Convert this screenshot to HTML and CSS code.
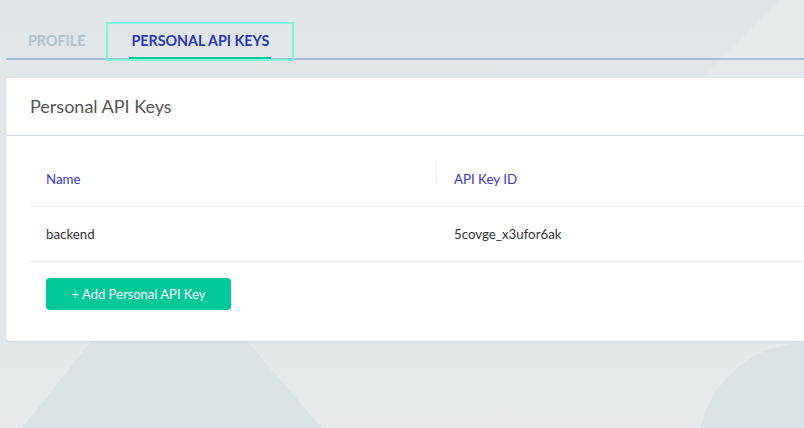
FILE: index.html
```html
<!DOCTYPE html>
<html>
<head>
<meta charset="utf-8">
<link rel="stylesheet" href="styles.css">
</head>
<body>
<div class="backdrop">
  <div class="bg-shape bg-trap"></div>
  <div class="bg-shape bg-circle"></div>
  <div class="bg-shape bg-diag"></div>
</div>
<div class="page">
  <nav class="tabs">
    <div class="tab">PROFILE</div>
    <div class="tab tab-active"><span class="tab-label">PERSONAL API KEYS</span></div>
  </nav>
  <section class="card">
    <header class="card-header">Personal API Keys</header>
    <div class="card-body">
      <div class="table">
        <div class="row row-head">
          <div class="cell cell-name">Name</div>
          <div class="cell cell-id"><span class="col-div"></span>API Key ID</div>
        </div>
        <div class="row">
          <div class="cell cell-name">backend</div>
          <div class="cell cell-id">5covge_x3ufor6ak</div>
        </div>
      </div>
      <button class="btn-add">+ Add Personal API Key</button>
    </div>
  </section>
</div>
</body>
</html>
```
FILE: styles.css
```css
html, body {
  margin: 0;
  padding: 0;
  width: 100%;
  height: 100%;
}
body {
  background: linear-gradient(180deg, #dee4e7 0px, #e2e7ea 80px, #e3e8eb 340px, #e6eaed 428px);
  font-family: Lato, "Open Sans", sans-serif;
  overflow: hidden;
  position: relative;
}
.backdrop {
  position: absolute;
  inset: 0;
  overflow: hidden;
  z-index: 0;
}
.bg-shape {
  position: absolute;
}
.bg-trap {
  left: 0;
  top: 340px;
  width: 400px;
  height: 88px;
  background: #dbe2e5;
  clip-path: polygon(92px 0, 246px 0, 322px 88px, 22px 88px);
}
.bg-circle {
  left: 698px;
  top: 343px;
  width: 216px;
  height: 216px;
  border-radius: 50%;
  background: #dbe2e5;
}
.bg-diag {
  left: 600px;
  top: 0;
  width: 204px;
  height: 80px;
  background: #e4e9ec;
  clip-path: polygon(204px 0, 204px 80px, 100px 80px, 180px 0);
}
.page {
  position: relative;
  z-index: 1;
  padding: 23px 0 0 6px;
}
.tabs {
  display: flex;
  border-bottom: 2px solid #abbfca;
  height: 35px;
}
.tab {
  height: 35px;
  line-height: 35px;
  padding: 0 22px;
  font-size: 14.3px;
  font-weight: 700;
  color: #b2c2cc;
  box-sizing: border-box;
}
.tab-active {
  color: #2c38b8;
  padding: 0 22px;
  outline: 2px solid #82f5d8;
  outline-offset: -1px;
  height: 37px;
  margin-bottom: -2px;
  position: relative;
}
.tab-label {
  display: inline-block;
  height: 34px;
  border-bottom: 3px solid #00c896;
  padding: 0 2px;
}
.card {
  margin-top: 18px;
  background: #fff;
  border-radius: 4px 0 0 4px;
  box-shadow: 0 1px 3px rgba(0, 0, 0, 0.08);
}
.card-header {
  height: 57px;
  line-height: 56px;
  padding-left: 24px;
  font-size: 18px;
  color: #555;
  border-bottom: 1px solid #c9d8e1;
}
.card-body {
  padding: 16px 0 31px 24px;
}
.table {
  display: flex;
  flex-direction: column;
}
.row {
  display: flex;
  height: 54px;
  align-items: center;
  border-bottom: 1px solid #ececec;
  font-size: 13.3px;
  color: #333;
}
.row-head {
  color: #3737d2;
}
.cell-name {
  width: 390px;
  padding-left: 16px;
}
.cell-id {
  position: relative;
  padding-left: 18px;
}
.col-div {
  position: absolute;
  left: 0;
  top: -11px;
  height: 22px;
  border-left: 1px solid #ececec;
}
.btn-add {
  margin: 16px 0 0 16px;
  width: 185px;
  height: 32px;
  border: none;
  border-radius: 4px;
  background: #00c896;
  color: #fff;
  font-family: Lato, "Open Sans", sans-serif;
  font-size: 13px;
  cursor: pointer;
}
```
